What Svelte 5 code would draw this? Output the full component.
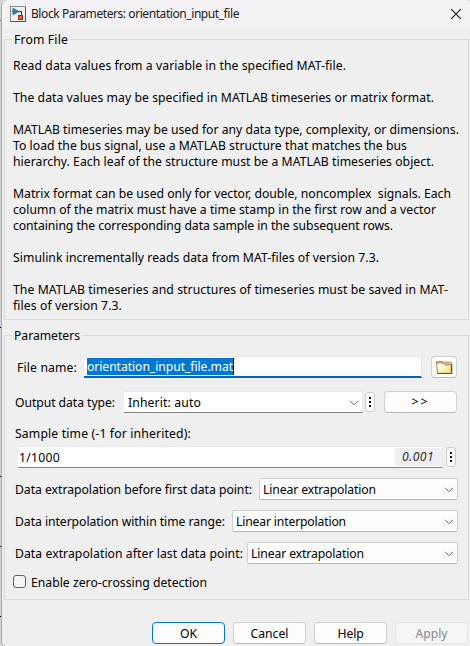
<script>
  const description = [
    ['Read data values from a variable in the specified MAT-file.', 333],
    null,
    ['The data values may be specified in MATLAB timeseries or matrix format.', 421],
    null,
    ['MATLAB timeseries may be used for any data type, complexity, or dimensions.', 446],
    ['To load the bus signal, use a MATLAB structure that matches the bus', 394],
    ['hierarchy. Each leaf of the structure must be a MATLAB timeseries object.', 421],
    null,
    ['Matrix format can be used only for vector, double, noncomplex  signals. Each', 438],
    ['column of the matrix must have a time stamp in the first row and a vector', 423],
    ['containing the corresponding data sample in the subsequent rows.', 380],
    null,
    ['Simulink incrementally reads data from MAT-files of version 7.3.', 366],
    null,
    ['The MATLAB timeseries and structures of timeseries must be saved in MAT-', 435],
    ['files of version 7.3.', 109]
  ];

  const policies = [
    ['Data extrapolation before first data point:', 237, 'Linear extrapolation', 113, 199],
    ['Data interpolation within time range:', 210, 'Linear interpolation', 110, 226],
    ['Data extrapolation after last data point:', 228, 'Linear extrapolation', 113, 211]
  ];

  const buttons = [
    ['OK', 17, 'primary'],
    ['Cancel', 38, ''],
    ['Help', 26, ''],
    ['Apply', 32, 'disabled']
  ];

  // Tracks a label so that its advance equals the given width.
  function fit(node, width) {
    const natural = node.getBoundingClientRect().width;
    const count = node.textContent.length;
    node.style.letterSpacing = `${(width - natural) / count}px`;
  }
</script>

{#snippet chevron()}
  <svg class="chevron" width="10" height="6" viewBox="0 0 10 6"><path d="M1 .8 5 4.8 9 .8" fill="none" stroke="#606060" /></svg>
{/snippet}

{#snippet dots()}
  <button class="dots" aria-label="More options"><i></i><i></i><i></i></button>
{/snippet}

<div class="desktop">
  <div class="ticks"><i class="soft"></i><i></i><i></i><i></i><i></i></div>
  <main class="dialog">
    <header>
      <svg width="16" height="16" viewBox="0 0 16 16">
        <rect x=".5" y=".5" width="15" height="15" fill="#f0f0f0" stroke="#8a8a8a" />
        <path d="M1 15.5h14.5V1" fill="none" stroke="#555" />
        <path d="M2 5.5h9.5v4" fill="none" stroke="#234" />
        <path d="M3 2.2 9 5.5 3 8.8z" fill="#2485c8" stroke="#185f99" stroke-width=".7" />
        <rect x="8.5" y="9.5" width="4" height="4" fill="#e9582b" stroke="#a52d12" />
      </svg>
      <h1><span use:fit={208}>Block Parameters: orientation_input_file</span></h1>
      <svg class="close" width="12" height="12" viewBox="0 0 12 12"><path d="m1.2 1.2 9.6 9.6m0-9.6L1.2 10.8" fill="none" stroke="#1b1b1b" stroke-width="1.1" /></svg>
    </header>

    <section class="group about">
      <h2><span use:fit={54}>From File</span></h2>
      <div class="copy">
        {#each description as line}
          <p>{#if line}<span use:fit={line[1]}>{line[0]}</span>{/if}</p>
        {/each}
      </div>
    </section>

    <section class="group params">
      <h2><span use:fit={66}>Parameters</span></h2>
      <div class="row file">
        <span class="label"><span use:fit={60}>File name:</span></span>
        <div class="field focused"><span class="selection"><span use:fit={146}>orientation_input_file.mat</span></span></div>
        <button class="push folder" aria-label="Browse">
          <svg width="18" height="15" viewBox="0 0 18 15">
            <defs><linearGradient id="paper" x2="1" y2="1"><stop offset=".2" stop-color="#fffef2" /><stop offset="1" stop-color="#f6df68" /></linearGradient></defs>
            <path d="M2.5 13.5 1.5 1.7h6l1 2h8.3v9.8z" fill="#d8b374" stroke="#a07b41" />
            <path d="M8 2.2h8.5v2.5H8z" fill="#d6b98d" stroke="#a98a5c" stroke-width=".8" />
            <path d="M2 3.8h6.5l1.2 1.8h5.6v7.2H3.2z" fill="url(#paper)" />
            <path d="M3 13.5h13.7V5" fill="none" stroke="#69501e" />
          </svg>
        </button>
      </div>

      <div class="row type">
        <span class="label"><span use:fit={100}>Output data type:</span></span>
        <div class="field auto"><span class="value" use:fit={73}>Inherit: auto</span>{@render chevron()}</div>
        {@render dots()}
        <button class="push more"><span use:fit={18}>&gt;&gt;</span></button>
      </div>

      <div class="row caption"><span class="value" use:fit={176}>Sample time (-1 for inherited):</span></div>
      <div class="row sample">
        <div class="field time"><span class="value" use:fit={41}>1/1000</span><em><span use:fit={32}>0.001</span></em></div>
        {@render dots()}
      </div>

      {#each policies as [label, labelWidth, value, valueWidth, width]}
        <div class="row policy">
          <span class="label"><span use:fit={labelWidth}>{label}</span></span>
          <div class="combo" style:width="{width}px"><span class="value" use:fit={valueWidth}>{value}</span>{@render chevron()}</div>
        </div>
      {/each}

      <div class="row check"><i class="box"></i><span class="value" use:fit={176}>Enable zero-crossing detection</span></div>
    </section>

    <footer>
      {#each buttons as [text, width, kind]}
        <button class="push {kind}"><span class="value" use:fit={width}>{text}</span></button>
      {/each}
    </footer>
  </main>
</div>

<style>
  :global(body) { margin: 0; overflow: hidden; }
  * { box-sizing: border-box; }
  span { white-space: pre; }
  .desktop {
    position: relative; width: 470px; height: 646px; overflow: hidden;
    display: flex; background: #d3d3d3; color: #000;
    font: 12.2px/16px "Noto Sans", "Open Sans", sans-serif;
  }
  .ticks { width: 1px; flex: none; padding-top: 20px; }
  .ticks i { display: block; width: 2px; height: 1px; background: #000; margin-bottom: 69px; }
  .ticks i.soft { background: #777; margin-bottom: 306px; }
  .ticks i:nth-child(2) { margin-bottom: 148px; }
  .dialog {
    width: 469px; height: 646px; background: #efefef; border-left: 1px solid #aaa;
    border-radius: 7px 4px 0 5px; overflow: hidden;
  }
  header { height: 28px; display: flex; align-items: center; padding: 0 8px; background: #f3f1f3; }
  h1, h2, p { margin: 0; font-size: inherit; font-weight: 400; line-height: 16px; }
  h1 { margin-left: 5px; flex: 1; font-size: 12px; color: #1a1a1a; }
  .group { margin-left: 2px; width: 465px; border: 1px solid #dadada; }
  .about { margin-top: 11px; height: 281px; }
  .params { margin-top: 15px; height: 265px; }
  h2 { width: max-content; margin: -8px 0 0 7px; padding: 0 2px; background: #efefef; }
  .copy { padding: 10px 0 0 8px; }
  p { height: 16px; }
  .row { display: flex; align-items: center; height: 22px; }
  .label, .value { padding-top: 2px; }
  .file { margin: 12px 0 0 12px; }
  .file .label { width: 67px; }
  .type { margin: 13px 0 0 10px; }
  .type .label { width: 109px; }
  .caption { margin: 9px 0 0 10px; }
  .sample { margin: 2px 0 0 13px; }
  .field {
    display: flex; align-items: center; height: 22px; padding-left: 1px;
    background: #fff; border: 1px solid #e8e8e8; border-left: 0; border-bottom: 1px solid #858585;
  }
  .focused { width: 338px; padding-left: 3px; border-bottom: 2px solid #0067c0; }
  .selection { height: 17px; line-height: 18px; color: #fff; background: #0078d7; border-right: 1px solid #000; }
  .auto { width: 239px; padding: 0 3px 0 4px; justify-content: space-between; }
  .time { width: 425px; justify-content: space-between; }
  em { width: 47px; height: 18px; padding-left: 7px; line-height: 18px; color: #333; background: #efefef; }
  button { font: inherit; padding: 0; margin: 0; color: #000; }
  .push {
    width: 73px; height: 22px; display: flex; align-items: center; justify-content: center;
    border: 1px solid #d0d0d0; border-bottom-color: #b9b9b9; border-radius: 4px; background: #fdfdfd;
  }
  .folder { width: 26px; margin-left: 9px; }
  .more { margin-left: 9px; }
  .dots {
    width: 10px; height: 20px; margin-left: 3px; display: flex; flex-direction: column; gap: 2px;
    align-items: center; justify-content: center; border: 1px solid #cdcdcd; border-radius: 3px; background: #fafafa;
  }
  .type .dots { margin-left: 2px; }
  .dots i { width: 2px; height: 2px; background: #111; }
  .policy { justify-content: space-between; margin: 10px 10px 0 10px; }
  .combo {
    height: 22px; display: flex; align-items: center; justify-content: space-between; padding: 0 3px;
    background: #fdfdfd; border: 1px solid #cfcfcf; border-bottom-color: #b5b5b5; border-radius: 2px;
  }
  .chevron { margin-top: 2px; flex: none; }
  .check { height: 21px; margin: 7px 0 0 8px; gap: 5px; }
  .box { width: 13px; height: 13px; border: 1px solid #626262; border-radius: 3px; background: #f5f5f5; }
  footer { display: flex; justify-content: flex-end; gap: 8px; margin-top: 22px; padding-right: 2px; }
  .push.primary { border-color: #0078d4; }
  .push.disabled { color: #8a8a8a; background: #f5f5f5; border-color: #e5e5e5; }
</style>
